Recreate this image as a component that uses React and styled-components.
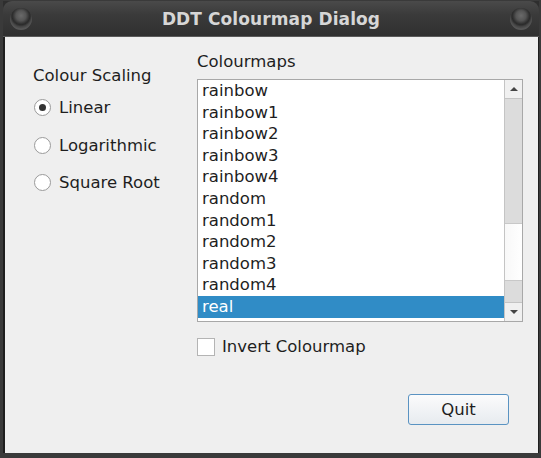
import React, { useState } from "react";
import styled, { createGlobalStyle } from "styled-components";

const GlobalStyle = createGlobalStyle`
  html, body {
    margin: 0;
    padding: 0;
    background: #3a3a3a;
  }
  body {
    font-family: "DejaVu Sans", "Noto Sans", sans-serif;
  }
`;

const Window = styled.div`
  margin: 1px 0 0 3px;
  width: 536px;
  height: 452px;
  display: flex;
  flex-direction: column;
  background: #2e2e2e;
`;

const TitleBar = styled.div`
  height: 35px;
  flex: none;
  display: flex;
  align-items: center;
  justify-content: space-between;
  padding: 0 7px 0 7px;
  border-radius: 9px 9px 0 0;
  background: linear-gradient(#4a4a4a, #3a3a3a 40%, #303030);
  border-bottom: 1px solid #5a5a5a;
`;

const Title = styled.div`
  font-weight: bold;
  font-size: 17px;
  color: #d6d6d6;
  letter-spacing: 0.1px;
`;

const WinButton = styled.div`
  width: 22px;
  height: 22px;
  border-radius: 50%;
  background: radial-gradient(circle at 50% 35%, #6a6a6a 0, #555 5px, #333 8px, #2b2b2b 9px, #444 11px);
  box-shadow: inset 0 -2px 2px rgba(120, 120, 120, 0.4);
`;

const Body = styled.div`
  flex: 1;
  display: flex;
  flex-direction: column;
  background: #efefef;
  border-left: 2px solid #1e1e1e;
  border-right: 1px solid #1e1e1e;
  padding: 15px 14px 28px 28px;
  font-size: 16.5px;
`;

const Main = styled.div`
  display: flex;
`;

const LeftCol = styled.div`
  width: 164px;
  flex: none;
  padding-top: 14px;
`;

const RightCol = styled.div`
  width: 326px;
  flex: none;
`;

const Label = styled.div`
  line-height: 19px;
  color: #1e1e1e;
`;

const RadioGroup = styled.div`
  margin-top: 4px;
  display: flex;
  flex-direction: column;
`;

const RadioRow = styled.div`
  display: flex;
  align-items: center;
  height: 37.5px;
  color: #1e1e1e;
  gap: 8px;
  margin-left: 1px;
`;

const RadioDot = styled.span`
  width: 15px;
  height: 15px;
  border-radius: 50%;
  border: 1px solid #9a9a9a;
  background: #fff;
  display: flex;
  align-items: center;
  justify-content: center;
  &::after {
    content: "";
    width: 7px;
    height: 7px;
    border-radius: 50%;
    background: ${(p) => (p.$checked ? "#333" : "transparent")};
  }
`;

const ListBox = styled.div`
  margin-top: 8px;
  height: 241px;
  border: 1px solid #a8a8a8;
  background: #fff;
  display: flex;
  overflow: hidden;
`;

const Items = styled.div`
  flex: 1;
  overflow: hidden;
`;

const Item = styled.div`
  height: 21.6px;
  line-height: 21.6px;
  padding-left: 4px;
  color: ${(p) => (p.$selected ? "#fff" : "#1e1e1e")};
  background: ${(p) => (p.$selected ? "#308cc6" : "transparent")};
`;

const ScrollBar = styled.div`
  width: 17px;
  flex: none;
  display: flex;
  flex-direction: column;
  border-left: 1px solid #c4c4c4;
  background: #dcdcdc;
`;

const Arrow = styled.div`
  height: 18px;
  flex: none;
  background: #f0f0f0;
  display: flex;
  align-items: center;
  justify-content: center;
  border-bottom: ${(p) => (p.$up ? "1px solid #c4c4c4" : "none")};
  border-top: ${(p) => (p.$up ? "none" : "1px solid #c4c4c4")};
  &::after {
    content: "";
    border-left: 4px solid transparent;
    border-right: 4px solid transparent;
    ${(p) => (p.$up ? "border-bottom: 4px solid #444;" : "border-top: 4px solid #444;")}
  }
`;

const Track = styled.div`
  flex: 1;
  display: flex;
  flex-direction: column;
  padding-top: 124px;
`;

const Thumb = styled.div`
  height: 56px;
  background: linear-gradient(90deg, #f8f8f8, #ffffff);
  border-top: 1px solid #c8c8c8;
  border-bottom: 1px solid #c8c8c8;
`;

const CheckRow = styled.div`
  display: flex;
  align-items: center;
  gap: 7px;
  margin-top: 15px;
  color: #1e1e1e;
`;

const CheckBox = styled.span`
  width: 16px;
  height: 16px;
  border: 1px solid #b4b4b4;
  background: #fff;
`;

const Footer = styled.div`
  margin-top: auto;
  padding-right: 15px;
  display: flex;
  justify-content: flex-end;
`;

const Button = styled.button`
  width: 101px;
  height: 31px;
  border: 1px solid #5a93c2;
  border-radius: 3px;
  background: linear-gradient(#fbfbfc, #e7ebef);
  font-family: "DejaVu Sans", sans-serif;
  font-size: 16.5px;
  color: #1e1e1e;
  padding: 0;
`;

const maps = [
  "rainbow",
  "rainbow1",
  "rainbow2",
  "rainbow3",
  "rainbow4",
  "random",
  "random1",
  "random2",
  "random3",
  "random4",
  "real",
];

const App = () => {
  const [scale] = useState("Linear");

  return (
    <>
      <GlobalStyle />
      <Window>
        <TitleBar>
          <WinButton />
          <Title>DDT Colourmap Dialog</Title>
          <WinButton />
        </TitleBar>
        <Body>
          <Main>
            <LeftCol>
              <Label>Colour Scaling</Label>
              <RadioGroup>
                {["Linear", "Logarithmic", "Square Root"].map((s) => (
                  <RadioRow key={s}>
                    <RadioDot $checked={s === scale} />
                    <span>{s}</span>
                  </RadioRow>
                ))}
              </RadioGroup>
            </LeftCol>
            <RightCol>
              <Label>Colourmaps</Label>
              <ListBox>
                <Items>
                  {maps.map((m) => (
                    <Item key={m} $selected={m === "real"}>{m}</Item>
                  ))}
                </Items>
                <ScrollBar>
                  <Arrow $up />
                  <Track>
                    <Thumb />
                  </Track>
                  <Arrow />
                </ScrollBar>
              </ListBox>
              <CheckRow>
                <CheckBox />
                <span>Invert Colourmap</span>
              </CheckRow>
            </RightCol>
          </Main>
          <Footer>
            <Button>Quit</Button>
          </Footer>
        </Body>
      </Window>
    </>
  );
};

export default App;
